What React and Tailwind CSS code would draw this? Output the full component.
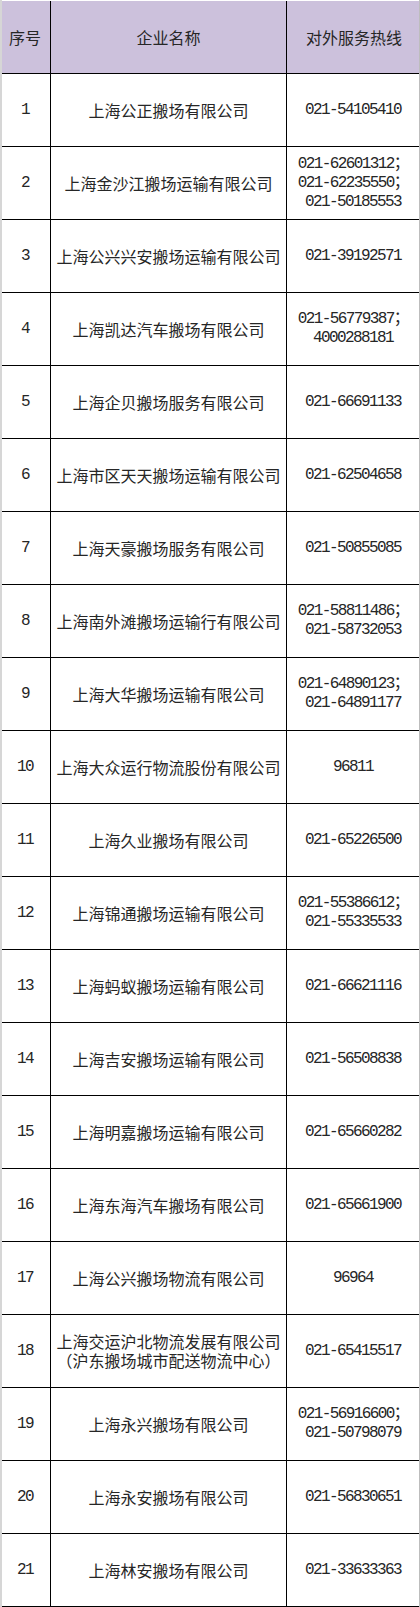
import React from "react";

const rows = [
  ["1", ["上海公正搬场有限公司"], ["021-54105410"]],
  ["2", ["上海金沙江搬场运输有限公司"], ["021-62601312；", "021-62235550；", "021-50185553"]],
  ["3", ["上海公兴兴安搬场运输有限公司"], ["021-39192571"]],
  ["4", ["上海凯达汽车搬场有限公司"], ["021-56779387；", "4000288181"]],
  ["5", ["上海企贝搬场服务有限公司"], ["021-66691133"]],
  ["6", ["上海市区天天搬场运输有限公司"], ["021-62504658"]],
  ["7", ["上海天豪搬场服务有限公司"], ["021-50855085"]],
  ["8", ["上海南外滩搬场运输行有限公司"], ["021-58811486；", "021-58732053"]],
  ["9", ["上海大华搬场运输有限公司"], ["021-64890123；", "021-64891177"]],
  ["10", ["上海大众运行物流股份有限公司"], ["96811"]],
  ["11", ["上海久业搬场有限公司"], ["021-65226500"]],
  ["12", ["上海锦通搬场运输有限公司"], ["021-55386612；", "021-55335533"]],
  ["13", ["上海蚂蚁搬场运输有限公司"], ["021-66621116"]],
  ["14", ["上海吉安搬场运输有限公司"], ["021-56508838"]],
  ["15", ["上海明嘉搬场运输有限公司"], ["021-65660282"]],
  ["16", ["上海东海汽车搬场有限公司"], ["021-65661900"]],
  ["17", ["上海公兴搬场物流有限公司"], ["96964"]],
  ["18", ["上海交运沪北物流发展有限公司", "（沪东搬场城市配送物流中心）"], ["021-65415517"]],
  ["19", ["上海永兴搬场有限公司"], ["021-56916600；", "021-50798079"]],
  ["20", ["上海永安搬场有限公司"], ["021-56830651"]],
  ["21", ["上海林安搬场有限公司"], ["021-33633363"]],
];

const cjk = { fontFamily: '"Noto Sans CJK SC", sans-serif' };
const mono = { fontFamily: '"Liberation Mono", "Noto Sans CJK SC", monospace' };

function Lines({ items }) {
  return items.map((t, i) => (
    <React.Fragment key={i}>
      {i > 0 && <br />}
      {t}
    </React.Fragment>
  ));
}

export default function App() {
  return (
    <div className="w-[420px] bg-white pt-[1px] border-l-2 border-l-[#d6d6d6] border-r border-r-[#bdbdbd] text-[#262626]">
      <div className="flex h-[73px] border-b border-black bg-[#ccc1dc]" style={cjk}>
        <div className="w-[49px] border-r border-black flex items-center justify-center text-[16px] pr-[2px]">序号</div>
        <div className="w-[236px] border-r border-black flex items-center justify-center text-[16px]">企业名称</div>
        <div className="flex-1 flex items-center justify-center text-[16px] pl-[2px]">对外服务热线</div>
      </div>
      {rows.map(([n, names, phones]) => (
        <div key={n} className="flex h-[73px] border-b border-black">
          <div className="w-[49px] border-r border-black flex items-center justify-center text-[16px] tracking-[-1.6px] pr-[2px]" style={mono}>{n}</div>
          <div className="w-[236px] border-r border-black flex items-center justify-center">
            <p className="text-center whitespace-nowrap text-[16px] leading-[19px]" style={cjk}>
              <Lines items={names} />
            </p>
          </div>
          <div className="flex-1 flex items-center justify-center">
            <p className="text-center whitespace-nowrap text-[16px] tracking-[-1.6px] leading-[19px]" style={mono}>
              <Lines items={phones} />
            </p>
          </div>
        </div>
      ))}
    </div>
  );
}
